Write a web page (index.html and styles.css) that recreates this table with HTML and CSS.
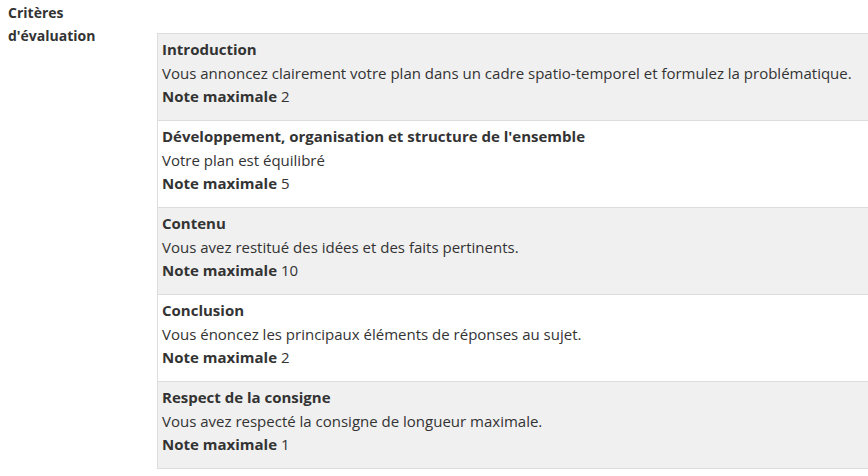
FILE: index.html
```html
<!DOCTYPE html>
<html lang="fr">
<head>
<meta charset="utf-8">
<link rel="stylesheet" href="styles.css">
</head>
<body>
<div class="layout">
  <div class="label">Critères d'évaluation</div>
  <div class="criteria">
    <div class="row odd">
      <div class="title">Introduction</div>
      <div class="desc">Vous annoncez clairement votre plan dans un cadre spatio-temporel et formulez la problématique.</div>
      <div class="note"><b>Note maximale</b> 2</div>
    </div>
    <div class="row">
      <div class="title">Développement, organisation et structure de l'ensemble</div>
      <div class="desc">Votre plan est équilibré</div>
      <div class="note"><b>Note maximale</b> 5</div>
    </div>
    <div class="row odd">
      <div class="title">Contenu</div>
      <div class="desc">Vous avez restitué des idées et des faits pertinents.</div>
      <div class="note"><b>Note maximale</b> 10</div>
    </div>
    <div class="row">
      <div class="title">Conclusion</div>
      <div class="desc">Vous énoncez les principaux éléments de réponses au sujet.</div>
      <div class="note"><b>Note maximale</b> 2</div>
    </div>
    <div class="row odd">
      <div class="title">Respect de la consigne</div>
      <div class="desc">Vous avez respecté la consigne de longueur maximale.</div>
      <div class="note"><b>Note maximale</b> 1</div>
    </div>
  </div>
</div>
</body>
</html>
```
FILE: styles.css
```css
html, body {
  margin: 0;
  padding: 0;
  overflow: hidden;
  background: #ffffff;
}
body {
  font-family: "Open Sans", "Noto Sans", sans-serif;
  font-size: 15px;
  line-height: 23px;
  color: #333333;
}
.layout {
  display: flex;
  align-items: flex-start;
  padding: 1px 0 0 8px;
}
.label {
  flex: 0 0 149px;
  box-sizing: border-box;
  padding-right: 39px;
  font-weight: bold;
  font-size: 14px;
  line-height: 23px;
}
.criteria {
  margin-top: 32px;
  flex: 1 1 auto;
  min-width: 0;
  border-top: 1px solid #dddddd;
}
.row {
  border-left: 1px solid #dddddd;
  border-bottom: 1px solid #dddddd;
  padding: 4px 0 0 4px;
  height: 87px;
  box-sizing: border-box;
  background: #ffffff;
  white-space: nowrap;
  overflow: hidden;
}
.row.odd {
  background: #f0f0f0;
}
.title {
  font-weight: bold;
  margin-bottom: 1px;
}
b {
  font-weight: bold;
}
```
